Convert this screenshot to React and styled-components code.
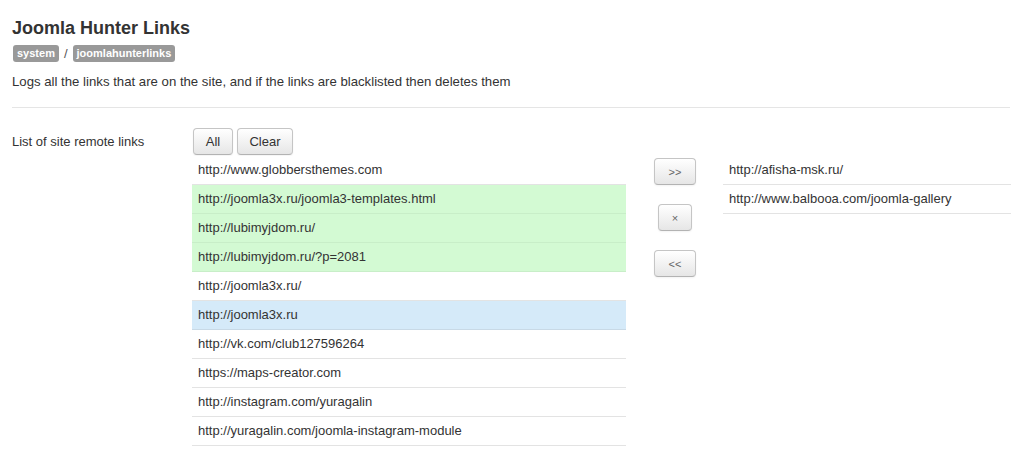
import styled, { createGlobalStyle } from "styled-components";

const GlobalStyle = createGlobalStyle`
  html, body {
    margin: 0;
    padding: 0;
    background: #fff;
  }
  body {
    font-family: "Liberation Sans", Arial, sans-serif;
    font-size: 13px;
    color: #333;
  }
`;

const Page = styled.div`
  padding: 16px 1px 0 12px;
`;

const Title = styled.h2`
  margin: 0;
  font-size: 18px;
  line-height: 24px;
  font-weight: bold;
  color: #333;
`;

const Crumbs = styled.div`
  display: flex;
  align-items: center;
  gap: 5px;
  margin-top: 5px;
  color: #555;
`;

const Badge = styled.span`
  display: inline-block;
  background: #999;
  color: #fff;
  font-size: 11px;
  font-weight: bold;
  line-height: 17px;
  padding: 0 4px;
  border-radius: 3px;
  margin-left: ${(p) => (p.$first ? "1px" : "0")};
`;

const Desc = styled.p`
  margin: 11px 0 0;
  font-size: 13.2px;
  line-height: 18px;
`;

const Rule = styled.hr`
  margin: 16px 0 20px;
  border: 0;
  border-top: 1px solid #e5e5e5;
`;

const Row = styled.div`
  display: flex;
  align-items: flex-start;
`;

const Label = styled.div`
  flex-shrink: 0;
  width: 180px;
  padding-top: 5px;
  line-height: 18px;
`;

const Column = styled.div`
  display: flex;
  flex-direction: column;
  flex-shrink: 0;
  padding-top: ${(p) => p.$top || 0}px;
`;

const Toolbar = styled.div`
  display: flex;
  gap: 4px;
  padding-left: 1px;
  margin-bottom: 1px;
`;

const Button = styled.button`
  font-family: "Liberation Sans", Arial, sans-serif;
  font-size: ${(p) => (p.$small ? "11px" : "13px")};
  color: ${(p) => (p.$small ? "#666" : "#333")};
  height: 27px;
  width: ${(p) => p.$w}px;
  padding: 0;
  border: 1px solid #c5c5c5;
  border-bottom-color: #b3b3b3;
  border-radius: 4px;
  background: linear-gradient(#ffffff, #e6e6e6);
  box-shadow: inset 0 1px 0 rgba(255, 255, 255, 0.2), 0 1px 2px rgba(0, 0, 0, 0.05);
  cursor: pointer;
`;

const List = styled.div`
  width: ${(p) => p.$w}px;
  display: flex;
  flex-direction: column;
`;

const Item = styled.div`
  height: 28px;
  line-height: 28px;
  padding-left: 6px;
  border-bottom: 1px solid
    ${(p) =>
      p.$tone === "green" ? "#c8eec8" : p.$tone === "blue" ? "#c8d9e6" : "#e3e3e3"};
  background: ${(p) =>
    p.$tone === "green" ? "#d3fad3" : p.$tone === "blue" ? "#d5eaf9" : "#fff"};
`;

const Mover = styled.div`
  flex-shrink: 0;
  width: 97px;
  padding: 30px 0 0 28px;
  box-sizing: border-box;
  display: flex;
  flex-direction: column;
  align-items: flex-start;
  gap: 19px;
`;

const CenterBtn = styled.div`
  padding-left: ${(p) => p.$offset || 0}px;
`;

const leftLinks = [
  { url: "http://www.globbersthemes.com" },
  { url: "http://joomla3x.ru/joomla3-templates.html", tone: "green" },
  { url: "http://lubimyjdom.ru/", tone: "green" },
  { url: "http://lubimyjdom.ru/?p=2081", tone: "green" },
  { url: "http://joomla3x.ru/" },
  { url: "http://joomla3x.ru", tone: "blue" },
  { url: "http://vk.com/club127596264" },
  { url: "https://maps-creator.com" },
  { url: "http://instagram.com/yuragalin" },
  { url: "http://yuragalin.com/joomla-instagram-module" },
];

const rightLinks = [
  "http://afisha-msk.ru/",
  "http://www.balbooa.com/joomla-gallery",
];

export default function App() {
  return (
    <>
      <GlobalStyle />
      <Page>
        <Title>Joomla Hunter Links</Title>
        <Crumbs>
          <Badge $first>system</Badge>
          <span>/</span>
          <Badge>joomlahunterlinks</Badge>
        </Crumbs>
        <Desc>
          Logs all the links that are on the site, and if the links are
          blacklisted then deletes them
        </Desc>
        <Rule />
        <Row>
          <Label>List of site remote links</Label>
          <Column>
            <Toolbar>
              <Button $w={40}>All</Button>
              <Button $w={56}>Clear</Button>
            </Toolbar>
            <List $w={434}>
              {leftLinks.map((l) => (
                <Item key={l.url} $tone={l.tone}>
                  {l.url}
                </Item>
              ))}
            </List>
          </Column>
          <Mover>
            <Button $small $w={42}>&gt;&gt;</Button>
            <CenterBtn $offset={4}>
              <Button $small $w={34}>×</Button>
            </CenterBtn>
            <Button $small $w={42}>&lt;&lt;</Button>
          </Mover>
          <Column $top={28}>
            <List $w={288}>
              {rightLinks.map((u) => (
                <Item key={u}>{u}</Item>
              ))}
            </List>
          </Column>
        </Row>
      </Page>
    </>
  );
}
